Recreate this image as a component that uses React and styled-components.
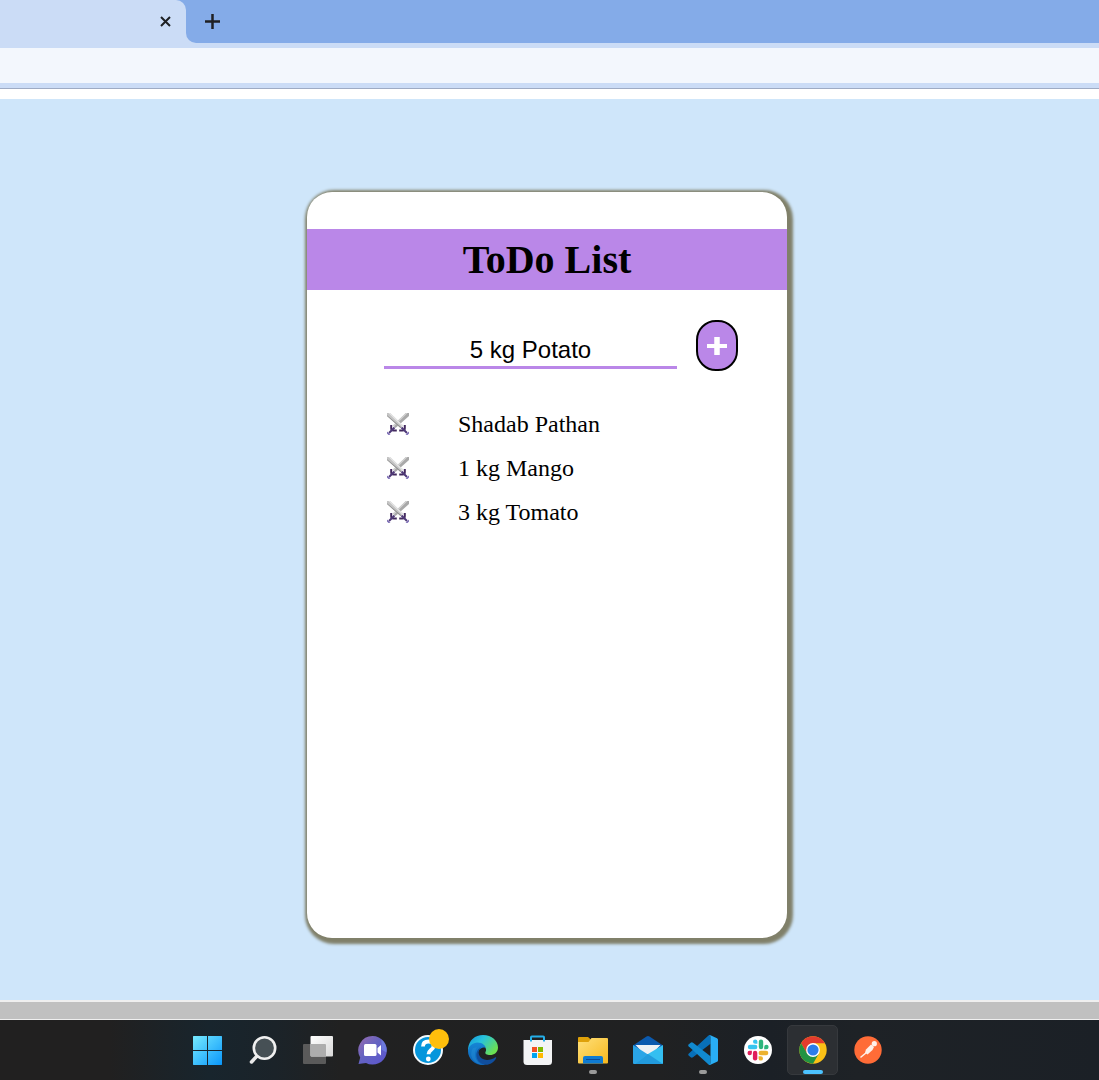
import React, { useState } from "react";
import styled, { createGlobalStyle } from "styled-components";

const GlobalStyle = createGlobalStyle`
  *, *::before, *::after { box-sizing: border-box; }
  body { margin: 0; background: #fff; }
  button { font: inherit; padding: 0; border: 0; background: none; cursor: pointer; }
`;

const Screen = styled.div`
  display: flex;
  flex-direction: column;
  min-height: 100vh;
  font-family: "Liberation Serif", "Times New Roman", serif;
  color: #000;
`;

const TabStrip = styled.header`
  display: flex;
  height: 43px;
  background: #cbdcf6;
`;

const TabCorner = styled.div`
  display: flex;
  background: linear-gradient(#84abe8 50%, #cbdcf6 50%);
`;

const Tab = styled.div`
  flex: none;
  display: flex;
  align-items: center;
  justify-content: flex-end;
  width: 186px;
  padding-right: 10px;
  background: #cbdcf6;
  border-top-right-radius: 10px;
`;

const StripFill = styled.div`
  flex: 1;
  display: flex;
  align-items: center;
  padding-left: 16px;
  background: #84abe8;
  border-bottom-left-radius: 10px;
`;

const TabButton = styled.button`
  display: grid;
  place-items: center;
  width: 21px;
  height: 21px;
  color: #1f2023;
`;

const Toolbar = styled.div`
  height: 45px;
  margin-bottom: 11px;
  border: solid #cbdcf6;
  border-width: 5px 0;
  background: #f3f7fd;
  box-shadow: 0 1px 0 #9eabc4;
`;

const Page = styled.main`
  flex: 1;
  display: flex;
  justify-content: center;
  padding: 93px 5px 62px 0;
  background: #cfe6fa;
`;

const Card = styled.section`
  width: 480px;
  padding-top: 37px;
  border-radius: 25px;
  background: #fff;
  box-shadow: 2px 2px 3px 4px #80806a;
`;

const Title = styled.h1`
  margin: 0 0 30px;
  padding: 8px 0;
  background: #ba87e8;
  font-size: 40px;
  line-height: 45px;
  text-align: center;
`;

const AddForm = styled.form`
  display: flex;
  align-items: flex-start;
  gap: 19px;
  padding: 0 49px 0 77px;
`;

const TextBox = styled.input`
  flex: 1;
  min-width: 0;
  height: 37px;
  margin-top: 12px;
  padding: 2px 0 0;
  border: 0;
  border-bottom: 3px solid #ba87e8;
  outline: 0;
  background: none;
  font: 24px/32px "Liberation Sans", Arial, sans-serif;
  color: #000;
  text-align: center;
`;

const AddButton = styled.button`
  display: grid;
  place-items: center;
  width: 42px;
  height: 51px;
  border: 2px solid #000;
  border-radius: 20px;
  background: #ba87e8;
  color: #fff;
`;

const List = styled.ul`
  display: grid;
  gap: 16px;
  margin: 39px 0 0;
  padding: 0 49px 0 80px;
  list-style: none;
`;

const Item = styled.li`
  display: flex;
  align-items: center;
  gap: 49px;
  font-size: 24px;
  line-height: 28px;
`;

const RemoveButton = styled.button`
  display: block;
  height: 22px;
`;

const ScrollTrack = styled.div`
  height: 20px;
  border: solid #efefef;
  border-width: 2px 0 1px;
  background: #c0c0c0;
`;

const Taskbar = styled.nav`
  display: flex;
  justify-content: center;
  height: 60px;
  padding-right: 24px;
  background: linear-gradient(90deg, #212020 0, #212020 10%, #18252d 19%, #1b2329 25%, #212121 31%, #202122 60%, #1b2026 70%, #1e2226 78%, #1b2026 100%);
`;

const AppButton = styled.button`
  display: grid;
  place-items: center;
  position: relative;
  width: 55px;
  height: 60px;

  &::before {
    content: "";
    position: absolute;
    inset: 5px 2px;
    border: 1px solid ${(p) => (p.$state === "active" ? "#36393d" : "transparent")};
    border-radius: 5px;
    background: ${(p) => (p.$state === "active" ? "#2c2f33" : "transparent")};
  }

  &::after {
    content: "";
    position: absolute;
    bottom: 6px;
    left: 50%;
    transform: translateX(-50%);
    width: ${(p) => (p.$state === "active" ? "20px" : "8px")};
    height: 4px;
    border-radius: 2px;
    background: ${(p) => ({ active: "#4cc2ff", open: "#9a9a9a" })[p.$state] || "transparent"};
  }

  svg { position: relative; display: block; overflow: visible; }
`;

const Swords = () => (
  <svg width="22" height="22" viewBox="0 0 22 22" aria-hidden="true">
    <path d="M22 0h-3.200L6 12.500 8.500 15 22 3z" fill="#a9a9a9" />
    <path d="M20.500 0H18.800L6 12.500l1 1z" fill="#d4d4d4" />
    <path d="M0 0h3.200L16 12.500 13.500 15 0 3z" fill="#c4c4c4" />
    <path d="M1.500 0h1.700L16 12.500l-1 1z" fill="#e6e6e6" />
    <path d="M0 2.200V3l13.500 12 .7-.8z" fill="#8c8c8c" />
    <path
      d="M4.200 12v3.200Q4.200 17.500 6.500 17.500H9.800M17.800 12v3.200Q17.800 17.500 15.500 17.500H12.200"
      fill="none"
      stroke="#432a5e"
      strokeWidth="2"
    />
    <path d="M7.500 14.500L2 20M14.500 14.500L20 20" stroke="#4f3a78" strokeWidth="2" />
    <path d="M0 18.500l3.500 3.200L1.500 22 0 20.500zM22 18.500l-3.500 3.200 2 .3L22 20.500z" fill="#7a6bb5" />
  </svg>
);

const icons = {
  Start: (
    <svg width="30" height="30" viewBox="0 0 30 30">
      <defs>
        <linearGradient id="start" x1="0" y1="0" x2="30" y2="30" gradientUnits="userSpaceOnUse">
          <stop stopColor="#78ecff" /><stop offset="1" stopColor="#0895fa" />
        </linearGradient>
      </defs>
      <path d="M.5 1H14v14H0V1.500zM15 1h13.500l.5.5V15H15zM0 16h14v14H.5l-.5-.5zM15 16h14v13.500l-.5.5H15z" fill="url(#start)" />
    </svg>
  ),
  Search: (
    <svg width="30" height="30" viewBox="0 0 30 30">
      <path d="M9.500 20.500L3.500 27" stroke="#e9e9e9" strokeWidth="3.500" strokeLinecap="round" />
      <circle cx="16.500" cy="13" r="10.700" fill="#465055" stroke="#f0f0f0" strokeWidth="2.600" />
    </svg>
  ),
  "Task View": (
    <svg width="30" height="30" viewBox="0 0 30 30">
      <defs>
        <linearGradient id="taskview" x1="0" y1="0" x2="1" y2="1">
          <stop stopColor="#fff" /><stop offset="1" stopColor="#d8d8d8" />
        </linearGradient>
      </defs>
      <rect x="0" y="9" width="23" height="20" rx="1" fill="#5a5a5a" />
      <rect x="7.500" y="1" width="22.500" height="20.500" rx="1" fill="url(#taskview)" />
      <path d="M7.500 9H22q1 0 1 1v11.500H8.500q-1 0-1-1z" fill="#adadad" />
    </svg>
  ),
  Chat: (
    <svg width="30" height="30" viewBox="0 0 30 30">
      <defs>
        <linearGradient id="chat" x1="0" y1="0" x2="1" y2="1">
          <stop stopColor="#9a6cae" /><stop offset=".45" stopColor="#6463c2" /><stop offset="1" stopColor="#5b55cf" />
        </linearGradient>
      </defs>
      <path d="M14.500 1A14.300 14.300 0 1 1 8 28L.5 29l1.700-6.500A14.300 14.300 0 0 1 14.500 1z" fill="url(#chat)" />
      <path d="M23.500 4.500a14.300 14.300 0 0 1 5 13l-5-3z" fill="#7085e6" opacity=".7" />
      <rect x="6" y="9" width="12.500" height="12" rx="1.500" fill="#fff" />
      <path d="M19.500 13l3.500-3v10.500l-3.500-3z" fill="#fff" />
    </svg>
  ),
  "Get Help": (
    <svg width="30" height="30" viewBox="0 0 30 30">
      <circle cx="15" cy="15" r="14" fill="#0596dc" stroke="#f5fafd" strokeWidth="2" />
      <path d="M10 11.500q0-5 5.500-5t5 4.800c0 3.500-5 3.700-5 8" fill="none" stroke="#fff" strokeWidth="3.800" />
      <circle cx="15.300" cy="24" r="2.400" fill="#fff" />
      <circle cx="26" cy="4" r="10" fill="#ffbf0c" />
    </svg>
  ),
  Edge: (
    <svg width="30" height="30" viewBox="0 0 30 30">
      <defs>
        <linearGradient id="edgeTop" x1="0" y1="0" x2="1" y2=".6">
          <stop stopColor="#1292db" /><stop offset=".45" stopColor="#28c3dc" /><stop offset="1" stopColor="#6ce051" />
        </linearGradient>
        <linearGradient id="edgeLeft" x1="0" y1="0" x2="0" y2="1">
          <stop stopColor="#1686d5" /><stop offset="1" stopColor="#0b60b6" />
        </linearGradient>
      </defs>
      <path d="M0 14C1 5 7 0 15 0c9 0 15 6 15 12.500 0 5-4 7.500-8 7.500-3 0-5.500-1-4.500-3 2-3-1-7-5-7C7 9 2 12 0 16z" fill="url(#edgeTop)" />
      <path d="M0 16c0-4.500 5-8.500 9.500-8.500 5 0 8 3 8.500 6-1-2-6-1-7.500 2.500-2 5 1 11.500 7 13.700C9 31.500 0 25 0 16z" fill="url(#edgeLeft)" />
      <path d="M13 12c-5 4-2 13 6 13 3 0 6-1 8-2.500 1-.5 1.500.2 1 1C26 27 22 30 17.500 29.800 8 28 5 17 13 12z" fill="#104e9d" />
      <path d="M5 13c-5 8 1 16 10 17C7 27 5 19 9 12z" fill="#248dd5" opacity=".5" />
    </svg>
  ),
  "Microsoft Store": (
    <svg width="30" height="30" viewBox="0 0 30 30">
      <path d="M.5 5H29V26.500q0 3.500-3.500 3.500H4Q.5 30 .5 26.500z" fill="#f3f4f5" />
      <path d="M8 6.500V2.300q0-.8.800-.8h11.400q.8 0 .8.800V6.500" fill="none" stroke="#24afe9" strokeWidth="2" />
      <path d="M9 12h5v5H9z" fill="#f25022" /><path d="M15 12h5v5h-5z" fill="#7fba00" />
      <path d="M9 18h5v5H9z" fill="#00a4ef" /><path d="M15 18h5v5h-5z" fill="#ffb900" />
    </svg>
  ),
  "File Explorer": (
    <svg width="30" height="30" viewBox="0 0 30 30">
      <defs>
        <linearGradient id="folder" x1="0" y1="0" x2="1" y2="1">
          <stop stopColor="#ffe07a" /><stop offset="1" stopColor="#f7b81e" />
        </linearGradient>
      </defs>
      <path d="M0 9V3q0-1 1-1h9l4 3.500V9z" fill="#dfa109" />
      <path d="M0 7h10.500l3-4H29q1 0 1 1V27.500q0 1-1 1H1q-1 0-1-1z" fill="url(#folder)" />
      <path d="M5 28.500V23Q5 21 7 21h16q2 0 2 2V28.500z" fill="#0f7bd2" />
      <path d="M8 24.500h14" stroke="#0b4b99" strokeWidth="1" />
    </svg>
  ),
  Mail: (
    <svg width="30" height="30" viewBox="0 0 30 30">
      <path d="M0 10.500L13.500 1.500q1.500-1 3 0L30 10.500l-4 5H4z" fill="#0b5aae" />
      <path d="M2.500 10h25L19 19H11z" fill="#eef1f4" />
      <path d="M0 10l15 9.500L30 29H1q-1 0-1-1z" fill="#2aa5e7" />
      <path d="M30 10v18q0 1-1 1H2L15 19z" fill="#34bff1" />
      <path d="M15 19L30 29H2z" fill="#229bdd" />
    </svg>
  ),
  "Visual Studio Code": (
    <svg width="30" height="30" viewBox="0 0 30 30">
      <path d="M.6 18.800L20.500.6Q21.500-.2 22.500.2V8.800L5 22.300q-1.200.8-2.300 0L.6 20.600q-.9-.9 0-1.800z" fill="#0870b9" />
      <path d="M.6 11.200L20.500 29.400q1 .8 2 .4V21.200L5 7.700q-1.200-.8-2.300 0L.6 9.400q-.9.900 0 1.800z" fill="#118ad0" />
      <path d="M21 .2Q22 0 23 .4l6 2.800q1 .5 1 1.600v20.400q0 1.100-1 1.600l-6 2.800q-1 .4-2 .2 1.500 0 1.500-1.800V2Q22.500.2 21 .2z" fill="#29aef5" />
    </svg>
  ),
  Slack: (
    <svg width="30" height="30" viewBox="0 0 30 30">
      <circle cx="15" cy="15" r="14" fill="#fff" />
      <g fill="#36c5f0"><rect x="4.800" y="9.800" width="9.600" height="4.400" rx="2.200" /><path d="M14.400 8.800h-2.200a2.200 2.200 0 1 1 2.200-2.200z" /></g>
      <g fill="#2eb67d"><rect x="15.800" y="4.500" width="4.400" height="9.700" rx="2.200" /><path d="M21.200 14.200V12a2.200 2.200 0 1 1 2.200 2.200z" /></g>
      <g fill="#e01e5a"><rect x="9.900" y="15.800" width="4.400" height="9.700" rx="2.200" /><path d="M8.900 15.800V18a2.200 2.200 0 1 1-2.200-2.200z" /></g>
      <g fill="#ecb22e"><rect x="15.600" y="15.800" width="9.700" height="4.400" rx="2.200" /><path d="M15.600 21.200h2.200a2.200 2.200 0 1 1-2.200 2.200z" /></g>
    </svg>
  ),
  Chrome: (
    <svg width="30" height="30" viewBox="0 0 30 30">
      <circle cx="15" cy="15" r="13.700" fill="#fbc116" />
      <path d="M3.100 8.200A13.700 13.700 0 0 1 26.900 8.200H15L9 18.400z" fill="#e33b2e" />
      <path d="M3.100 8.200A13.700 13.700 0 0 0 15 28.700L20.900 18.400 9.100 18.400z" fill="#229342" />
      <circle cx="15" cy="15" r="6.900" fill="#fff" />
      <circle cx="15" cy="15" r="5.600" fill="#2b7de9" />
    </svg>
  ),
  Postman: (
    <svg width="30" height="30" viewBox="0 0 30 30">
      <circle cx="15" cy="15" r="13.700" fill="#ff6c37" />
      <circle cx="21.300" cy="8.700" r="2.600" fill="#fff0e9" />
      <path d="M18 9.500l3 2.500-1.500 3-5 4.500L12 17.500l1-3z" fill="#fff0e9" />
      <path d="M13.500 17.500L8 22" stroke="#fff0e9" strokeWidth="1.600" strokeLinecap="round" />
    </svg>
  ),
};

const appStates = { Chrome: "active", "File Explorer": "open", "Visual Studio Code": "open" };

export default function App() {
  const [items, setItems] = useState(["Shadab Pathan", "1 kg Mango", "3 kg Tomato"]);
  const [draft, setDraft] = useState("5 kg Potato");

  const addItem = (event) => {
    event.preventDefault();
    if (!draft.trim()) return;
    setItems([...items, draft]);
    setDraft("");
  };

  return (
    <Screen>
      <GlobalStyle />
      <TabStrip>
        <TabCorner>
          <Tab>
            <TabButton aria-label="Close tab">
              <svg width="11" height="11" viewBox="0 0 11 11">
                <path d="M1 1l9 9M10 1l-9 9" stroke="currentColor" strokeWidth="2" />
              </svg>
            </TabButton>
          </Tab>
        </TabCorner>
        <StripFill>
          <TabButton aria-label="New tab">
            <svg width="15" height="15" viewBox="0 0 15 15">
              <path d="M7.500 0v15M0 7.500h15" stroke="currentColor" strokeWidth="2.500" strokeLinecap="round" />
            </svg>
          </TabButton>
        </StripFill>
      </TabStrip>
      <Toolbar />
      <Page>
        <Card>
          <Title>ToDo List</Title>
          <AddForm onSubmit={addItem}>
            <TextBox
              aria-label="New item"
              value={draft}
              onChange={(event) => setDraft(event.target.value)}
            />
            <AddButton type="submit" aria-label="Add item">
              <svg width="20" height="18" viewBox="0 0 20 18">
                <path d="M10 0v18" stroke="currentColor" strokeWidth="5.500" />
                <path d="M0 9h20" stroke="currentColor" strokeWidth="4" />
              </svg>
            </AddButton>
          </AddForm>
          <List>
            {items.map((item, index) => (
              <Item key={index}>
                <RemoveButton
                  aria-label={`Remove ${item}`}
                  onClick={() => setItems(items.filter((_, i) => i !== index))}
                >
                  <Swords />
                </RemoveButton>
                <span>{item}</span>
              </Item>
            ))}
          </List>
        </Card>
      </Page>
      <ScrollTrack />
      <Taskbar aria-label="Taskbar">
        {Object.entries(icons).map(([name, icon]) => (
          <AppButton key={name} aria-label={name} $state={appStates[name]}>
            {icon}
          </AppButton>
        ))}
      </Taskbar>
    </Screen>
  );
}
